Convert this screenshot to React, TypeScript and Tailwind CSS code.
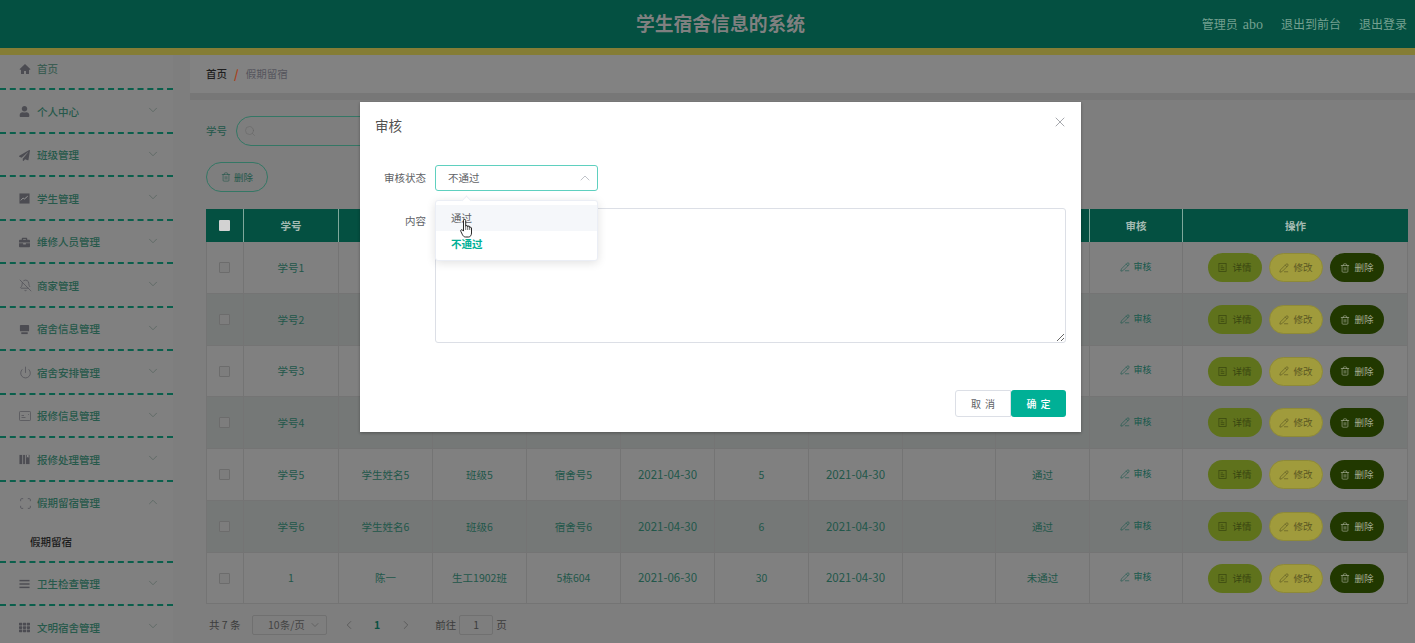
import React from "react";
import { ChevronDown, ChevronUp, ChevronLeft, ChevronRight, Search, Trash2, PencilLine, X, BellOff, Power, Scan } from "lucide-react";
import { FaUser, FaPaperPlane, FaBriefcase, FaTh } from "react-icons/fa";

const font = { fontFamily: '"Noto Sans CJK SC","Noto Sans",sans-serif' };

function Home() {
  return (
    <svg viewBox="0 0 12 12" className="w-[12px] h-[12px]" fill="#4c4c52">
      <path d="M6 1L0.5 6.2 1.4 7 2 6.5V11h3V8h2v3h3V6.5l.6.5.9-.8z" />
    </svg>
  );
}
function ChartBox() {
  return (
    <svg viewBox="0 0 12 12" className="w-[11px] h-[11px]">
      <rect width="11" height="11" x="0.5" y="0.5" fill="#4c4c52" />
      <path d="M2 8l2.5-2.5 1.5 1L9.5 3.5" stroke="#9a9a9a" strokeWidth="1" fill="none" />
    </svg>
  );
}
function Platform() {
  return (
    <svg viewBox="0 0 12 12" className="w-[11px] h-[11px]">
      <rect x="1" y="1" width="10" height="7" rx="1" fill="#4c4c52" />
      <rect x="2.5" y="9" width="7" height="2" fill="#4c4c52" />
    </svg>
  );
}
function PostCard() {
  return (
    <svg viewBox="0 0 12 10" className="w-[12px] h-[10px]" fill="none" stroke="#55555b" strokeWidth="0.8">
      <rect x="0.5" y="0.5" width="11" height="9" rx="0.8" />
      <path d="M2.5 6.5h4M2.5 4.5h2.5M9 3.5h0.8" />
    </svg>
  );
}
function Books() {
  return (
    <svg viewBox="0 0 12 12" className="w-[11px] h-[11px]" fill="#4c4c52">
      <rect x="0.5" y="1" width="3" height="10" />
      <rect x="4.5" y="1" width="2" height="10" />
      <path d="M7.5 1h4v10h-4z" />
      <path d="M8.5 1h2v3l-1-.8-1 .8z" fill="#8a8a8a" />
    </svg>
  );
}
function Lines() {
  return (
    <svg viewBox="0 0 12 10" className="w-[11px] h-[10px]" fill="#4c4c52">
      <rect x="0.5" y="0.5" width="11" height="1.6" />
      <rect x="0.5" y="4.2" width="11" height="1.6" />
      <rect x="0.5" y="7.9" width="11" height="1.6" />
    </svg>
  );
}
function Tickets() {
  return (
    <svg viewBox="0 0 10 10" className="w-[9px] h-[9px]" fill="none" stroke="currentColor" strokeWidth="0.8">
      <rect x="1" y="0.6" width="8" height="8.8" />
      <path d="M3 3.2h2.5M3 5.2h4M3 7.2h4" />
    </svg>
  );
}
function Hand() {
  return (
    <svg viewBox="0 0 12 19" className="absolute left-[100px] top-[117px] w-[12px] h-[19px]" fill="#fff" stroke="#111" strokeWidth="0.9" strokeLinejoin="round">
      <path d="M3.5 1.5a1.1 1.1 0 0 1 2.2 0V7.5a1 1 0 0 1 2 0v.5a1 1 0 0 1 2 0v.7a1 1 0 0 1 1.8.3V14c0 2-1 4-3 4H5.5c-1.5 0-2.3-1-3-2.2L.8 12.3c-.6-1.2.9-2.2 1.8-1.2l.9 1z" />
      <path d="M5.7 8v3M7.7 8v3M9.7 8.5V11" fill="none" strokeWidth="0.6" />
    </svg>
  );
}

const navItems: { label: string; icon: React.ReactNode; open?: boolean }[] = [
  { label: "个人中心", icon: <FaUser size={11} color="#4c4c52" /> },
  { label: "班级管理", icon: <FaPaperPlane size={11} color="#4c4c52" /> },
  { label: "学生管理", icon: <ChartBox /> },
  { label: "维修人员管理", icon: <FaBriefcase size={11} color="#4c4c52" /> },
  { label: "商家管理", icon: <BellOff size={13} color="#55555b" strokeWidth={1.5} /> },
  { label: "宿舍信息管理", icon: <Platform /> },
  { label: "宿舍安排管理", icon: <Power size={13} color="#55555b" strokeWidth={1.5} /> },
  { label: "报修信息管理", icon: <PostCard /> },
  { label: "报修处理管理", icon: <Books /> },
  { label: "假期留宿管理", icon: <Scan size={13} color="#55555b" strokeWidth={1.6} />, open: true },
  { label: "卫生检查管理", icon: <Lines /> },
  { label: "文明宿舍管理", icon: <FaTh size={11} color="#4c4c52" /> },
];

function NavLabel({ icon, label, chevron }: { icon: React.ReactNode; label: string; chevron?: "down" | "up" }) {
  return (
    <div className="relative flex items-center h-[41.5px] pl-[19px] pt-[2px]">
      <span className="w-[18px] flex items-center shrink-0">{icon}</span>
      <span className="text-[10.5px] font-medium text-[#27594b]">{label}</span>
      {chevron === "down" && <ChevronDown size={14} strokeWidth={1.3} color="#56655f" className="absolute right-[13px] top-[13px]" />}
      {chevron === "up" && <ChevronUp size={14} strokeWidth={1.3} color="#56655f" className="absolute right-[13px] top-[13px]" />}
    </div>
  );
}

function Sidebar() {
  return (
    <aside className="w-[173px] shrink-0 bg-[#808080]">
      <div className="h-[35px] border-b-2 border-dashed border-[#0b5f4c] flex items-center pl-[19px] pb-[6px]">
        <span className="w-[18px] flex items-center"><Home /></span>
        <span className="text-[10.5px] font-medium text-[#3c5d53]">首页</span>
      </div>
      {navItems.map((n) => (
        <div key={n.label} className="border-b-2 border-dashed border-[#0b5f4c]">
          <NavLabel icon={n.icon} label={n.label} chevron={n.open ? "up" : "down"} />
          {n.open && (
            <div className="h-[37.5px] pl-[30px] flex items-center text-[10.5px] font-medium text-[#1c1c1c]">假期留宿</div>
          )}
        </div>
      ))}
    </aside>
  );
}

const rows = [
  { a: "学号1", b: "学生姓名1", c: "班级1", d: "宿舍号1", e: "2021-04-30", f: "1", g: "2021-04-30", s: "通过", h: "h-[52px]" },
  { a: "学号2", b: "学生姓名2", c: "班级2", d: "宿舍号2", e: "2021-04-30", f: "2", g: "2021-04-30", s: "通过", h: "h-[52px]" },
  { a: "学号3", b: "学生姓名3", c: "班级3", d: "宿舍号3", e: "2021-04-30", f: "3", g: "2021-04-30", s: "通过", h: "h-[51px]" },
  { a: "学号4", b: "学生姓名4", c: "班级4", d: "宿舍号4", e: "2021-04-30", f: "4", g: "2021-04-30", s: "通过", h: "h-[52px]" },
  { a: "学号5", b: "学生姓名5", c: "班级5", d: "宿舍号5", e: "2021-04-30", f: "5", g: "2021-04-30", s: "通过", h: "h-[52px]" },
  { a: "学号6", b: "学生姓名6", c: "班级6", d: "宿舍号6", e: "2021-04-30", f: "6", g: "2021-04-30", s: "通过", h: "h-[52px]" },
  { a: "1", b: "陈一", c: "生工1902班", d: "5栋604", e: "2021-06-30", f: "30", g: "2021-04-30", s: "未通过", h: "h-[51px]" },
];

const heads = ["学号", "学生姓名", "班级", "宿舍号", "留宿日期", "留宿天数", "申请日期", "备注", "审核状态", "审核", "操作"];

function OpButton({ kind }: { kind: "detail" | "edit" | "del" }) {
  if (kind === "detail")
    return (
      <span className="w-[54px] h-[29px] rounded-full bg-[#5f721c] text-[#384510] text-[9.5px] flex items-center justify-center gap-[5px]">
        <Tickets />详情
      </span>
    );
  if (kind === "edit")
    return (
      <span className="w-[54px] h-[29px] rounded-full bg-[#a09b3c] border border-[#8e8a38] text-[#5a5723] text-[9.5px] flex items-center justify-center gap-[4px]">
        <PencilLine size={10} strokeWidth={1.5} />修改
      </span>
    );
  return (
    <span className="w-[54px] h-[29px] rounded-full bg-[#213800] text-[#a3ab92] text-[9.5px] flex items-center justify-center gap-[4px]">
      <Trash2 size={10} strokeWidth={1.6} />删除
    </span>
  );
}

function DataTable() {
  const td = "border-r border-b border-[#747474] text-center text-[10.5px] text-[#22574a] p-0";
  const date = "border-r border-b border-[#747474] text-center text-[11.5px] text-[#22574a] p-0";
  return (
    <table className="table-fixed border-separate border-spacing-0 w-[1202px]">
      <colgroup>
        <col className="w-[38px]" />
        <col className="w-[95px]" />
        <col className="w-[94px]" />
        <col className="w-[94px]" />
        <col className="w-[94px]" />
        <col className="w-[94px]" />
        <col className="w-[94px]" />
        <col className="w-[94px]" />
        <col className="w-[93px]" />
        <col className="w-[94px]" />
        <col className="w-[93px]" />
        <col className="w-[225px]" />
      </colgroup>
      <thead>
        <tr className="h-[33px] bg-[#045041]">
          <th className="border-r border-[#7fa89b] p-0">
            <span className="block w-[11px] h-[11px] mx-auto rounded-[1px] bg-[#d2d2d2]" />
          </th>
          {heads.map((h, i) => (
            <th key={h} className={(i < heads.length - 1 ? "border-r border-[#7fa89b] " : "") + "p-0 text-[10.5px] font-bold text-[#a4bab2] text-center"}>{h}</th>
          ))}
        </tr>
      </thead>
      <tbody>
        {rows.map((r, i) => (
          <tr key={r.a} className={r.h + " " + (i % 2 === 1 ? "bg-[#757877]" : "bg-[#808080]")}>
            <td className={td + " border-l"}>
              <span className="block w-[11px] h-[11px] ml-[12px] bg-[#7d7d7d] border border-[#6c6c6c] rounded-[1px]" />
            </td>
            <td className={td}>{r.a}</td>
            <td className={td}>{r.b}</td>
            <td className={td}>{r.c}</td>
            <td className={td}>{r.d}</td>
            <td className={date}>{r.e}</td>
            <td className={td}>{r.f}</td>
            <td className={date}>{r.g}</td>
            <td className={td}></td>
            <td className={td}>{r.s}</td>
            <td className={td}>
              <span className="inline-flex items-center gap-[3px] text-[9px] text-[#15584b]"><PencilLine size={10} strokeWidth={1.4} />审核</span>
            </td>
            <td className={td}>
              <div className="flex items-center justify-center gap-[7px] pl-[2px]">
                <OpButton kind="detail" />
                <OpButton kind="edit" />
                <OpButton kind="del" />
              </div>
            </td>
          </tr>
        ))}
      </tbody>
    </table>
  );
}

function Pagination() {
  return (
    <div className="flex items-center h-[20px] mt-[11px] pl-[3px] text-[10.5px] text-[#3c3c3c]">
      <span className="w-[31px] whitespace-nowrap">共 7 条</span>
      <span className="ml-[12px] w-[75px] h-[20px] border border-[#707070] rounded-[2px] flex items-center pl-[15px] relative text-[#444]">
        10条/页
        <ChevronDown size={12} strokeWidth={1.2} color="#505050" className="absolute right-[5px] top-[3px]" />
      </span>
      <ChevronLeft size={14} strokeWidth={1.4} color="#555555" className="ml-[15px]" />
      <span className="ml-[18px] font-bold text-[#0b5243]">1</span>
      <ChevronRight size={14} strokeWidth={1.4} color="#555555" className="ml-[19px]" />
      <span className="ml-[22px]">前往</span>
      <span className="ml-[3px] w-[34px] h-[20px] border border-[#707070] rounded-[2px] flex items-center justify-center">1</span>
      <span className="ml-[3px]">页</span>
    </div>
  );
}

function Dialog() {
  return (
    <div className="absolute left-[360px] top-[102px] w-[721px] h-[330px] bg-white shadow-[0_1px_3px_rgba(0,0,0,0.3)] px-[15px] text-[#606266]">
      <div className="h-[48px] flex items-center pb-[2px] text-[13.5px] text-[#505050]">审核</div>
      <X size={16} strokeWidth={1.2} color="#909399" className="absolute right-[13px] top-[12px]" />
      <div className="flex items-center mt-[15px] h-[26px]">
        <span className="w-[51px] text-right text-[10.5px]">审核状态</span>
        <div className="ml-[9px] w-[163px] h-[26px] border border-[#5fd0bf] rounded-[3px] flex items-center pl-[12px] relative text-[10.5px]">
          不通过
          <ChevronUp size={16} strokeWidth={1.2} color="#b0b4bb" className="absolute right-[4px] top-[4px]" />
        </div>
      </div>
      <div className="flex mt-[17px]">
        <span className="w-[51px] text-right text-[10.5px] pt-[5px]">内容</span>
        <textarea className="ml-[9px] w-[631px] h-[135px] border border-[#dcdfe6] rounded-[3px] outline-none" />
      </div>
      <div className="flex justify-end mt-[47px]">
        <span className="w-[56px] h-[27px] border border-[#dcdfe6] rounded-l-[3px] flex items-center justify-center pl-[4px] text-[10px] tracking-[4px] text-[#606266]">取消</span>
        <span className="w-[55px] h-[27px] bg-[#00b096] rounded-[3px] flex items-center justify-center pl-[4px] text-[10px] tracking-[4px] text-white font-medium">确定</span>
      </div>

      <div className="absolute left-[75px] top-[98px] w-[163px] h-[61px] bg-white rounded-[3px] border border-[#ebeef5] shadow-[0_2px_10px_rgba(0,0,0,0.12)] py-[4px] text-[10.5px]">
        <span className="absolute left-[27px] -top-[4px] w-[7px] h-[7px] bg-white rotate-45 border-l border-t border-[#ebeef5]" />
        <div className="h-[26px] bg-[#f5f7fa] pl-[15px] flex items-center text-[#606266] relative">通过</div>
        <div className="h-[26px] pl-[15px] flex items-center text-[#00b096] font-bold">不通过</div>
      </div>
      <Hand />
    </div>
  );
}

export default function App() {
  return (
    <div className="relative w-[1415px] h-[643px] overflow-hidden bg-[#7e7e7e]" style={font}>
      <header className="h-[48px] bg-[#045041] relative flex items-center justify-end pr-[8px] gap-[18px] text-[12px] text-[#74a090]">
        <span className="absolute left-[636px] top-[9px] text-[18.8px] font-bold text-[#808080] leading-[28px]">学生宿舍信息的系统</span>
        <span>管理员<span className="ml-[5px] text-[14px]" style={{ fontFamily: '"Liberation Serif",serif' }}>abo</span></span>
        <span>退出到前台</span>
        <span>退出登录</span>
      </header>
      <div className="h-[7px] bg-[#857d35]" />
      <div className="flex h-[588px]">
        <Sidebar />
        <main className="ml-[17px] flex-1 min-w-0">
          <div className="h-[38px] bg-[#828282] flex items-center pl-[16px] text-[10.5px]">
            <span className="text-[#1e1e1e] font-medium">首页</span>
            <span className="mx-[7px] text-[12px] text-[#a8431c] font-bold">/</span>
            <span className="text-[#55555d]">假期留宿</span>
          </div>
          <div className="h-[7px] bg-[#777777]" />
          <div className="pl-[16px] pt-[16px]">
            <div className="flex items-center h-[30px] text-[10.5px] text-[#22574a]">
              <span>学号</span>
              <span className="ml-[9px] w-[200px] h-[30px] rounded-full border border-[#347765] flex items-center pl-[7px]">
                <Search size={12} strokeWidth={1.2} color="#666666" />
              </span>
            </div>
            <span className="mt-[16px] w-[62px] h-[30px] rounded-full border border-[#347765] flex items-center justify-center gap-[3px] text-[9.5px] text-[#22574a]">
              <Trash2 size={10} strokeWidth={1.4} />删除
            </span>
            <div className="mt-[17px]">
              <DataTable />
            </div>
            <Pagination />
          </div>
        </main>
      </div>
      <Dialog />
    </div>
  );
}
